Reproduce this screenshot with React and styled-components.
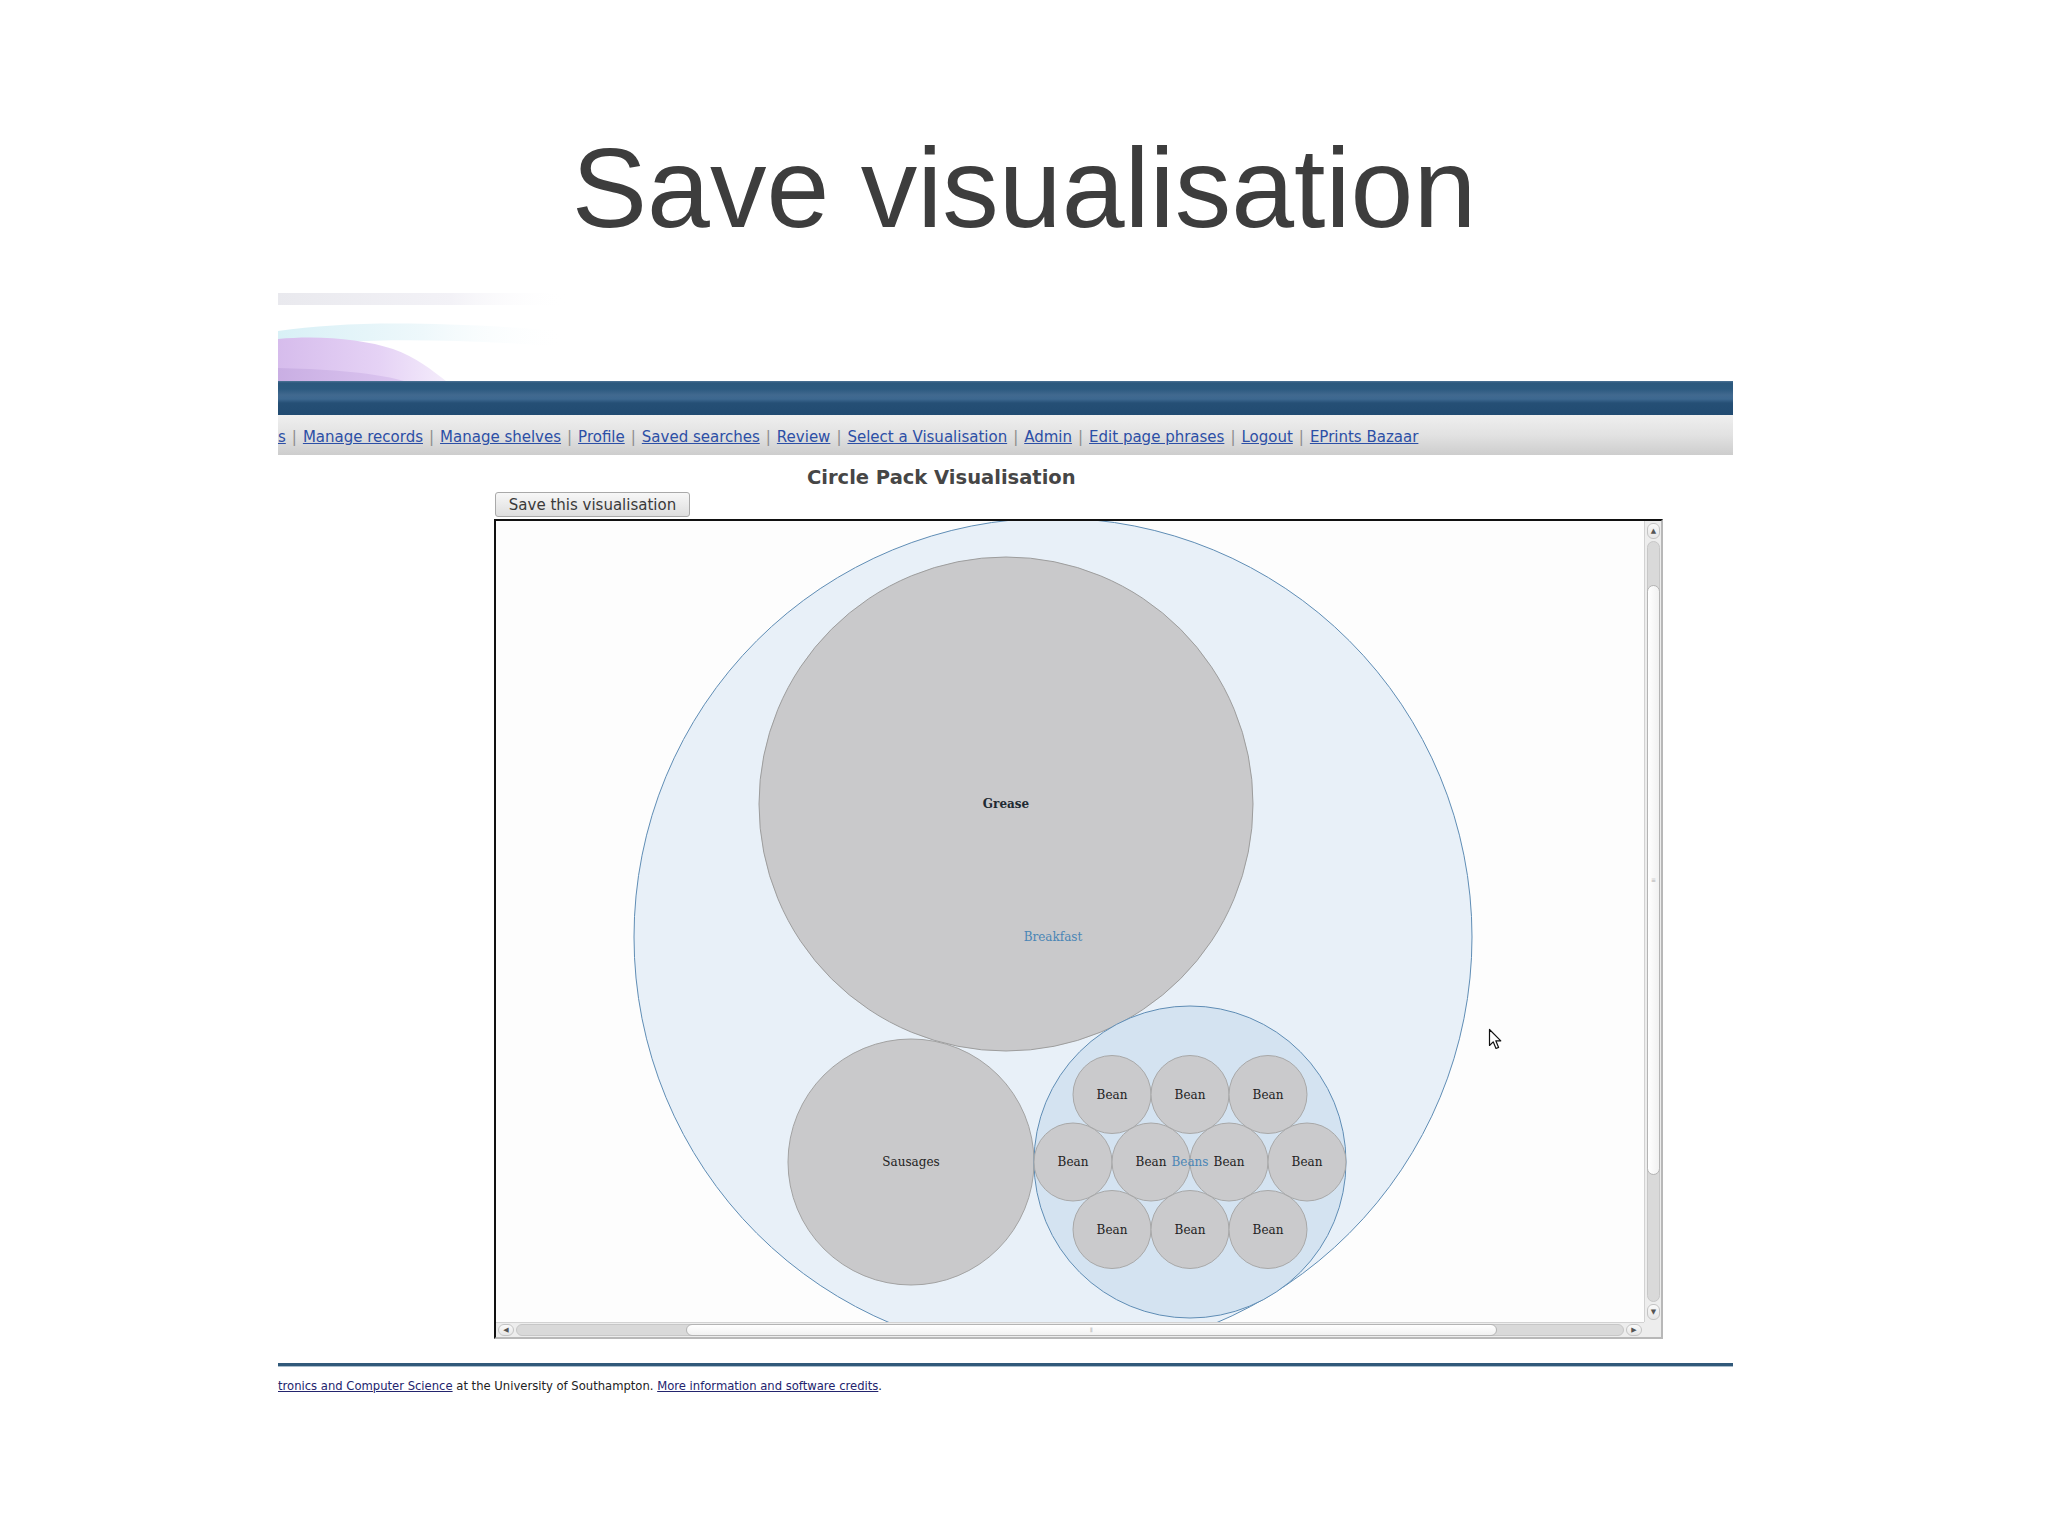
import React from "react";
import styled, { createGlobalStyle } from "styled-components";

const Global = createGlobalStyle`
  html, body { margin: 0; padding: 0; background: #fff; }
  body { font-family: "DejaVu Sans", sans-serif; }
`;

const Slide = styled.div`
  width: 2048px;
  height: 1535px;
  background: #fff;
  display: flex;
  flex-direction: column;
  overflow: hidden;
`;

const Title = styled.h1`
  margin: 132px 0 0;
  font: 400 113px/1 "Liberation Sans", Arial, sans-serif;
  color: #3d3d3d;
  text-align: center;
`;

const Panel = styled.div`
  margin: 40px 0 0 278px;
  width: 1455px;
  display: flex;
  flex-direction: column;
`;

const Header = styled.div`
  height: 96px;
  display: flex;
`;

const Bar = styled.div`
  height: 34px;
  background: linear-gradient(
    #4c7395 0px,
    #2b587d 2px,
    #2c5a80 8px,
    #41698f 14px,
    #3d6890 18px,
    #254f75 22px,
    #214b71 34px
  );
`;

const Nav = styled.nav`
  height: 40px;
  box-sizing: border-box;
  padding-top: 4px;
  display: flex;
  align-items: center;
  background: linear-gradient(#efefef, #e2e2e2 50%, #cdcdcd);
  font: 15px "DejaVu Sans", sans-serif;
  white-space: nowrap;
`;

const NavLink = styled.a`
  color: #2c4fa6;
  text-decoration: underline;
`;

const Sep = styled.span`
  color: #8c8c8c;
  margin: 0 6px;
`;

const Heading = styled.h2`
  margin: 11px 0 0;
  padding-left: 529px;
  font: 700 19.5px/24px "DejaVu Sans", sans-serif;
  color: #464646;
`;

const ButtonRow = styled.div`
  margin-top: 2px;
  padding-left: 217px;
  display: flex;
`;

const SaveButton = styled.button`
  height: 25px;
  width: 195px;
  padding: 0;
  border: 1px solid #a9a9a9;
  border-radius: 3px;
  background: linear-gradient(#f7f7f7, #dedede);
  font: 15px "DejaVu Sans", sans-serif;
  color: #3a3a3a;
`;

const Frame = styled.div`
  margin: 2px 0 0 216px;
  width: 1169px;
  height: 820px;
  box-sizing: border-box;
  border-top: 2px solid #111;
  border-left: 2px solid #111;
  border-right: 2px solid #b8b8b8;
  border-bottom: 2px solid #b8b8b8;
  display: grid;
  grid-template-columns: 1148px 17px;
  grid-template-rows: 801px 15px;
`;

const Viewport = styled.div`
  position: relative;
  overflow: hidden;
  background: #fdfdfd;
`;

const Cursor = styled.svg`
  position: absolute;
  left: 992px;
  top: 507px;
`;

const VScroll = styled.div`
  display: flex;
  flex-direction: column;
  gap: 2px;
  padding: 2px 1px 2px 2px;
  background: #ededed;
  border-left: 1px solid #d2d2d2;
`;

const HScroll = styled.div`
  display: flex;
  gap: 2px;
  padding: 1px 2px 1px 2px;
  background: #ededed;
  border-top: 1px solid #d2d2d2;
`;

const Corner = styled.div`
  background: #ededed;
`;

const ArrowBox = styled.div`
  flex: none;
  width: ${(p) => (p.$horizontal ? "14px" : "auto")};
  height: ${(p) => (p.$horizontal ? "auto" : "14px")};
  border: 1px solid #c4c4c4;
  border-radius: 6px;
  background: linear-gradient(#fafafa, #e6e6e6);
  display: flex;
  align-items: center;
  justify-content: center;
  color: #555;
  font-size: 7px;
  line-height: 1;
`;

const Trough = styled.div`
  flex: 1;
  display: flex;
  flex-direction: ${(p) => (p.$horizontal ? "row" : "column")};
  background: #d9d9d9;
  border: 1px solid #c7c7c7;
  border-radius: 7px;
`;

const TroughGap = styled.div`
  flex: none;
  width: ${(p) => (p.$horizontal ? `${p.$size}px` : "auto")};
  height: ${(p) => (p.$horizontal ? "auto" : `${p.$size}px`)};
`;

const Thumb = styled.div`
  flex: none;
  width: ${(p) => (p.$horizontal ? `${p.$size}px` : "auto")};
  height: ${(p) => (p.$horizontal ? "auto" : `${p.$size}px`)};
  margin: -1px;
  border: 1px solid #b4b4b4;
  border-radius: 7px;
  background: ${(p) =>
    p.$horizontal
      ? "linear-gradient(#ffffff, #f1f1f1)"
      : "linear-gradient(90deg, #ffffff, #f1f1f1)"};
  display: flex;
  align-items: center;
  justify-content: center;
  color: #b0b0b0;
  font-size: 6px;
  line-height: 1;
`;

const FooterRule = styled.div`
  margin-top: 24px;
  height: 3px;
  background: #31597a;
  border-bottom: 1px solid #a9bccb;
`;

const FooterText = styled.p`
  margin: 12px 0 0;
  font: 11.6px "DejaVu Sans", sans-serif;
  color: #222;
  white-space: nowrap;
`;

const FooterLink = styled.a`
  color: #23246e;
  text-decoration: underline;
`;

const navItems = [
  "s",
  "Manage records",
  "Manage shelves",
  "Profile",
  "Saved searches",
  "Review",
  "Select a Visualisation",
  "Admin",
  "Edit page phrases",
  "Logout",
  "EPrints Bazaar",
];

const BC = { x: 694, y: 641 };
const R = 39;
const H = 67.5;
const beans = [
  [-78, -H], [0, -H], [78, -H],
  [-117, 0], [-39, 0], [39, 0], [117, 0],
  [-78, H], [0, H], [78, H],
].map(([dx, dy]) => ({ x: BC.x + dx, y: BC.y + dy }));

function Swoosh() {
  return (
    <svg width="300" height="96" viewBox="0 0 300 96">
      <defs>
        <linearGradient id="grey" x1="0" x2="1" y1="0" y2="0">
          <stop offset="0" stopColor="#e9e9ee" />
          <stop offset="0.6" stopColor="#f3f2f7" />
          <stop offset="1" stopColor="#ffffff" stopOpacity="0" />
        </linearGradient>
        <linearGradient id="cyan" x1="0" x2="1" y1="0" y2="0">
          <stop offset="0" stopColor="#d8f0f6" />
          <stop offset="0.5" stopColor="#eef8fb" />
          <stop offset="1" stopColor="#ffffff" stopOpacity="0" />
        </linearGradient>
        <linearGradient id="lav" x1="0" x2="1" y1="0" y2="0">
          <stop offset="0" stopColor="#d6bcec" />
          <stop offset="0.6" stopColor="#e5d2f5" />
          <stop offset="1" stopColor="#f4ecfb" />
        </linearGradient>
        <linearGradient id="lav2" x1="0" x2="1" y1="0" y2="0">
          <stop offset="0" stopColor="#c9aee3" />
          <stop offset="1" stopColor="#dcc6f0" />
        </linearGradient>
      </defs>
      <rect x="0" y="8" width="290" height="12" fill="url(#grey)" />
      <path d="M0,46 C70,36 150,36 290,46 L290,62 C180,54 90,52 0,62 Z" fill="url(#cyan)" />
      <path d="M0,54 C40,50 85,54 115,64 C138,72 155,86 168,96 L0,96 Z" fill="url(#lav)" />
      <path d="M0,83 C40,84 90,86 126,96 L0,96 Z" fill="url(#lav2)" />
    </svg>
  );
}

function CirclePack() {
  const labelStyle = { fontFamily: '"DejaVu Serif", serif', fontSize: 12 };
  return (
    <svg width="1148" height="801" viewBox="0 0 1148 801">
      <circle cx="557" cy="416" r="419" fill="#e8f0f8" stroke="#5f8db5" strokeWidth="1" />
      <circle cx="510" cy="283" r="247" fill="#c9c9cb" stroke="#9d9d9d" strokeWidth="1" />
      <circle cx="415" cy="641" r="123" fill="#c9c9cb" stroke="#a3a3a3" strokeWidth="1" />
      <circle cx={BC.x} cy={BC.y} r="156" fill="#d4e3f1" stroke="#5f8db5" strokeWidth="1" />
      {beans.map((b, i) => (
        <circle key={i} cx={b.x} cy={b.y} r={R} fill="#cacacc" stroke="#a8a8a8" strokeWidth="1" />
      ))}
      <g style={labelStyle} textAnchor="middle">
        <text x="510" y="287" fill="#1f2a33" fontWeight="700">Grease</text>
        <text x="557" y="420" fill="#4a86b6">Breakfast</text>
        <text x="415" y="645" fill="#222">Sausages</text>
        {beans.map((b, i) => (
          <text key={i} x={b.x} y={b.y + 4} fill="#222">Bean</text>
        ))}
        <text x={BC.x} y={BC.y + 4} fill="#4a86b6">Beans</text>
      </g>
    </svg>
  );
}

export default function App() {
  return (
    <>
      <Global />
      <Slide>
        <Title>Save visualisation</Title>
        <Panel>
          <Header>
            <Swoosh />
          </Header>
          <Bar />
          <Nav>
            {navItems.map((item, i) => (
              <React.Fragment key={item}>
                {i > 0 && <Sep>|</Sep>}
                <NavLink href="#">{item}</NavLink>
              </React.Fragment>
            ))}
          </Nav>
          <Heading>Circle Pack Visualisation</Heading>
          <ButtonRow>
            <SaveButton type="button">Save this visualisation</SaveButton>
          </ButtonRow>
          <Frame>
            <Viewport>
              <CirclePack />
              <Cursor width="14" height="22" viewBox="0 0 14 22">
                <path
                  d="M1.5,1.5 L1.5,17.5 L5.2,13.8 L8,20.5 L10.6,19.4 L7.8,12.8 L12.8,12.8 Z"
                  fill="#fff"
                  stroke="#111"
                  strokeWidth="1.2"
                  strokeLinejoin="round"
                />
              </Cursor>
            </Viewport>
            <VScroll>
              <ArrowBox>▲</ArrowBox>
              <Trough>
                <TroughGap $size={44} />
                <Thumb $size={588}>≡</Thumb>
              </Trough>
              <ArrowBox>▼</ArrowBox>
            </VScroll>
            <HScroll>
              <ArrowBox $horizontal>◀</ArrowBox>
              <Trough $horizontal>
                <TroughGap $horizontal $size={170} />
                <Thumb $horizontal $size={809}>⦀</Thumb>
              </Trough>
              <ArrowBox $horizontal>▶</ArrowBox>
            </HScroll>
            <Corner />
          </Frame>
          <FooterRule />
          <FooterText>
            <FooterLink href="#">tronics and Computer Science</FooterLink> at the University of
            Southampton. <FooterLink href="#">More information and software credits</FooterLink>.
          </FooterText>
        </Panel>
      </Slide>
    </>
  );
}
